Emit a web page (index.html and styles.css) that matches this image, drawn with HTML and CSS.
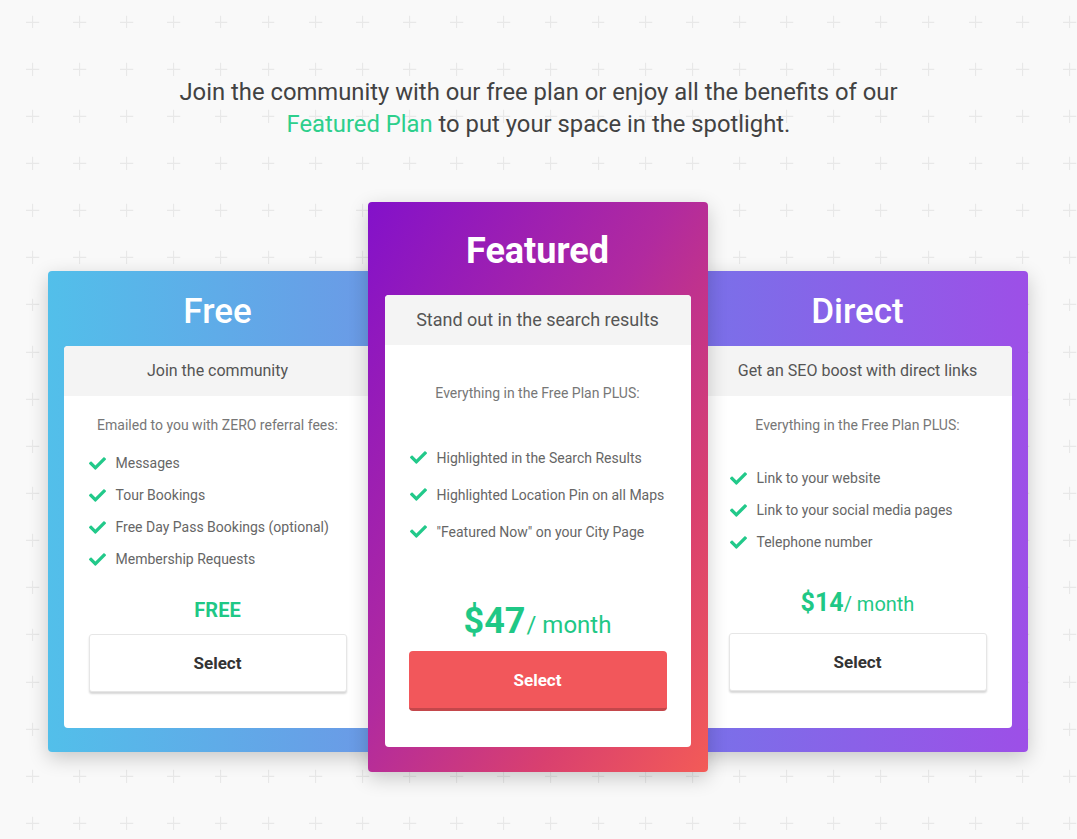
FILE: index.html
```html
<!DOCTYPE html>
<html lang="en">
<head>
<meta charset="utf-8">
<title>Plans</title>
<link rel="stylesheet" href="styles.css">
</head>
<body>
<main class="page">
  <p class="intro">Join the community with our free plan or enjoy all the benefits of our<br><span class="accent">Featured Plan</span> to put your space in the spotlight.</p>

  <section class="plans">
    <article class="plan plan-free">
      <h2 class="plan-title">Free</h2>
      <div class="plan-panel">
        <div class="plan-sub">Join the community</div>
        <div class="plan-body">
          <p class="plan-lead">Emailed to you with ZERO referral fees:</p>
          <ul class="features">
            <li><svg class="check" viewBox="0 64 512 384"><path d="M173.9 439.4l-166.4-166.4c-10-10-10-26.2 0-36.2l36.2-36.2c10-10 26.2-10 36.2 0L192 312.7 432.1 72.6c10-10 26.2-10 36.2 0l36.2 36.2c10 10 10 26.2 0 36.2l-294.4 294.4c-10 10-26.2 10-36.2 0z"/></svg>Messages</li>
            <li><svg class="check" viewBox="0 64 512 384"><path d="M173.9 439.4l-166.4-166.4c-10-10-10-26.2 0-36.2l36.2-36.2c10-10 26.2-10 36.2 0L192 312.7 432.1 72.6c10-10 26.2-10 36.2 0l36.2 36.2c10 10 10 26.2 0 36.2l-294.4 294.4c-10 10-26.2 10-36.2 0z"/></svg>Tour Bookings</li>
            <li><svg class="check" viewBox="0 64 512 384"><path d="M173.9 439.4l-166.4-166.4c-10-10-10-26.2 0-36.2l36.2-36.2c10-10 26.2-10 36.2 0L192 312.7 432.1 72.6c10-10 26.2-10 36.2 0l36.2 36.2c10 10 10 26.2 0 36.2l-294.4 294.4c-10 10-26.2 10-36.2 0z"/></svg>Free Day Pass Bookings (optional)</li>
            <li><svg class="check" viewBox="0 64 512 384"><path d="M173.9 439.4l-166.4-166.4c-10-10-10-26.2 0-36.2l36.2-36.2c10-10 26.2-10 36.2 0L192 312.7 432.1 72.6c10-10 26.2-10 36.2 0l36.2 36.2c10 10 10 26.2 0 36.2l-294.4 294.4c-10 10-26.2 10-36.2 0z"/></svg>Membership Requests</li>
          </ul>
          <div class="price price-free">FREE</div>
          <button class="select">Select</button>
        </div>
      </div>
    </article>

    <article class="plan plan-featured">
      <h2 class="plan-title">Featured</h2>
      <div class="plan-panel">
        <div class="plan-sub">Stand out in the search results</div>
        <div class="plan-body">
          <p class="plan-lead">Everything in the Free Plan PLUS:</p>
          <ul class="features">
            <li><svg class="check" viewBox="0 64 512 384"><path d="M173.9 439.4l-166.4-166.4c-10-10-10-26.2 0-36.2l36.2-36.2c10-10 26.2-10 36.2 0L192 312.7 432.1 72.6c10-10 26.2-10 36.2 0l36.2 36.2c10 10 10 26.2 0 36.2l-294.4 294.4c-10 10-26.2 10-36.2 0z"/></svg>Highlighted in the Search Results</li>
            <li><svg class="check" viewBox="0 64 512 384"><path d="M173.9 439.4l-166.4-166.4c-10-10-10-26.2 0-36.2l36.2-36.2c10-10 26.2-10 36.2 0L192 312.7 432.1 72.6c10-10 26.2-10 36.2 0l36.2 36.2c10 10 10 26.2 0 36.2l-294.4 294.4c-10 10-26.2 10-36.2 0z"/></svg>Highlighted Location Pin on all Maps</li>
            <li><svg class="check" viewBox="0 64 512 384"><path d="M173.9 439.4l-166.4-166.4c-10-10-10-26.2 0-36.2l36.2-36.2c10-10 26.2-10 36.2 0L192 312.7 432.1 72.6c10-10 26.2-10 36.2 0l36.2 36.2c10 10 10 26.2 0 36.2l-294.4 294.4c-10 10-26.2 10-36.2 0z"/></svg>"Featured Now" on your City Page</li>
          </ul>
          <div class="price price-featured"><strong>$47</strong>/ month</div>
          <button class="select select-primary">Select</button>
        </div>
      </div>
    </article>

    <article class="plan plan-direct">
      <h2 class="plan-title">Direct</h2>
      <div class="plan-panel">
        <div class="plan-sub">Get an SEO boost with direct links</div>
        <div class="plan-body">
          <p class="plan-lead">Everything in the Free Plan PLUS:</p>
          <ul class="features">
            <li><svg class="check" viewBox="0 64 512 384"><path d="M173.9 439.4l-166.4-166.4c-10-10-10-26.2 0-36.2l36.2-36.2c10-10 26.2-10 36.2 0L192 312.7 432.1 72.6c10-10 26.2-10 36.2 0l36.2 36.2c10 10 10 26.2 0 36.2l-294.4 294.4c-10 10-26.2 10-36.2 0z"/></svg>Link to your website</li>
            <li><svg class="check" viewBox="0 64 512 384"><path d="M173.9 439.4l-166.4-166.4c-10-10-10-26.2 0-36.2l36.2-36.2c10-10 26.2-10 36.2 0L192 312.7 432.1 72.6c10-10 26.2-10 36.2 0l36.2 36.2c10 10 10 26.2 0 36.2l-294.4 294.4c-10 10-26.2 10-36.2 0z"/></svg>Link to your social media pages</li>
            <li><svg class="check" viewBox="0 64 512 384"><path d="M173.9 439.4l-166.4-166.4c-10-10-10-26.2 0-36.2l36.2-36.2c10-10 26.2-10 36.2 0L192 312.7 432.1 72.6c10-10 26.2-10 36.2 0l36.2 36.2c10 10 10 26.2 0 36.2l-294.4 294.4c-10 10-26.2 10-36.2 0z"/></svg>Telephone number</li>
          </ul>
          <div class="price price-direct"><strong>$14</strong>/ month</div>
          <button class="select">Select</button>
        </div>
      </div>
    </article>
  </section>
</main>
</body>
</html>
```

FILE: styles.css
```css
* { box-sizing: border-box; }

html, body {
  margin: 0;
  padding: 0;
}

body {
  font-family: Roboto, "Liberation Sans", Arial, sans-serif;
  background-color: #f9f9f9;
  background-image: url("data:image/svg+xml,%3Csvg xmlns='http://www.w3.org/2000/svg' width='47.15' height='47.15'%3E%3Cpath d='M33 15.5v13M26.5 22h13' stroke='%23e8e8e8' stroke-width='1.1' fill='none'/%3E%3C/svg%3E");
  background-size: 47.15px 47.15px;
  background-position: -0.5px 0;
  min-height: 839px;
  color: #444;
}

.page {
  padding-top: 76px;
  padding-bottom: 40px;
}

.intro {
  margin: 0;
  text-align: center;
  font-size: 23.8px;
  line-height: 32px;
  color: #424242;
  font-weight: 400;
}

.accent { color: #2dcf8c; }

.plans {
  display: flex;
  justify-content: center;
  align-items: flex-start;
  margin-top: 62px;
  padding-right: 2px;
}

.plan {
  width: 340px;
  flex: 0 0 340px;
  border-radius: 4px;
  box-shadow: 0 6px 20px rgba(0, 0, 0, 0.2);
  margin-top: 69px;
}

.plan-free {
  background: linear-gradient(to right, #52bfea, #6c98e6);
}

.plan-direct {
  background: linear-gradient(to right, #7872e9, #9d4fe7);
}

.plan-featured {
  margin: 0 -20px;
  position: relative;
  z-index: 2;
  background: linear-gradient(to bottom right, #8311ca 0%, #b12a9f 45%, #d9406f 75%, #f35b57 100%);
}

.plan-title {
  margin: 0;
  height: 75px;
  line-height: 82px;
  text-align: center;
  color: #fff;
  font-size: 35px;
  font-weight: 500;
}

.plan-featured .plan-title {
  height: 93px;
  line-height: 98px;
  font-size: 36px;
  font-weight: 700;
}

.plan-panel {
  background: #fff;
  border-radius: 4px;
  margin: 0 16px 24px;
  overflow: hidden;
}

.plan-featured .plan-panel {
  margin: 0 17px 25px;
}

.plan-sub {
  height: 50px;
  line-height: 50px;
  background: #f4f4f4;
  text-align: center;
  font-size: 16px;
  color: #555;
}

.plan-featured .plan-sub { font-size: 18px; }

.plan-body {
  padding: 19px 25px 36px;
  text-align: center;
}

.plan-featured .plan-body { padding: 38px 24px 36px; }
.plan-direct .plan-body { padding: 19px 25px 37px; }

.plan-lead {
  margin: 0;
  font-size: 14px;
  line-height: 20px;
  color: #777;
}

.features {
  list-style: none;
  margin: 12px 0 0;
  padding: 0;
  text-align: left;
}

.plan-featured .features { margin-top: 36px; padding-left: 1px; }
.plan-direct .features { margin-top: 27px; padding-left: 1px; }

.features li {
  display: flex;
  align-items: center;
  height: 32px;
  font-size: 14px;
  color: #666;
}

.plan-featured .features li { height: 37px; }

.check {
  width: 17px;
  height: 13px;
  fill: #22c98a;
  margin-right: 10px;
  flex: none;
}

.price {
  display: flex;
  justify-content: center;
  align-items: baseline;
  color: #1fc886;
}

.price-free {
  margin-top: 23px;
  height: 24px;
  font-size: 20px;
  line-height: 24px;
  font-weight: 700;
}

.price-featured {
  margin-top: 49px;
  height: 44px;
  font-size: 24px;
  line-height: 44px;
}

.price-featured strong {
  font-size: 36px;
  font-weight: 700;
  margin-right: 1px;
}

.price-direct {
  margin-top: 30px;
  height: 30px;
  font-size: 20px;
  line-height: 30px;
}

.price-direct strong {
  font-size: 25px;
  font-weight: 700;
}

.select {
  display: block;
  width: 258px;
  height: 58px;
  margin: 12px auto 0;
  background: #fff;
  border: 1px solid #e6e6e6;
  border-radius: 3px;
  box-shadow: 0 2px 2px rgba(0, 0, 0, 0.16);
  font-family: inherit;
  font-size: 17px;
  font-weight: 700;
  color: #333;
  cursor: pointer;
}

.plan-direct .select { margin-top: 15px; }

.select-primary {
  height: 60px;
  margin-top: 8px;
  background: #f2575b;
  border: none;
  border-bottom: 3px solid #c4474b;
  border-radius: 4px;
  color: #fff;
  box-shadow: none;
}
```
